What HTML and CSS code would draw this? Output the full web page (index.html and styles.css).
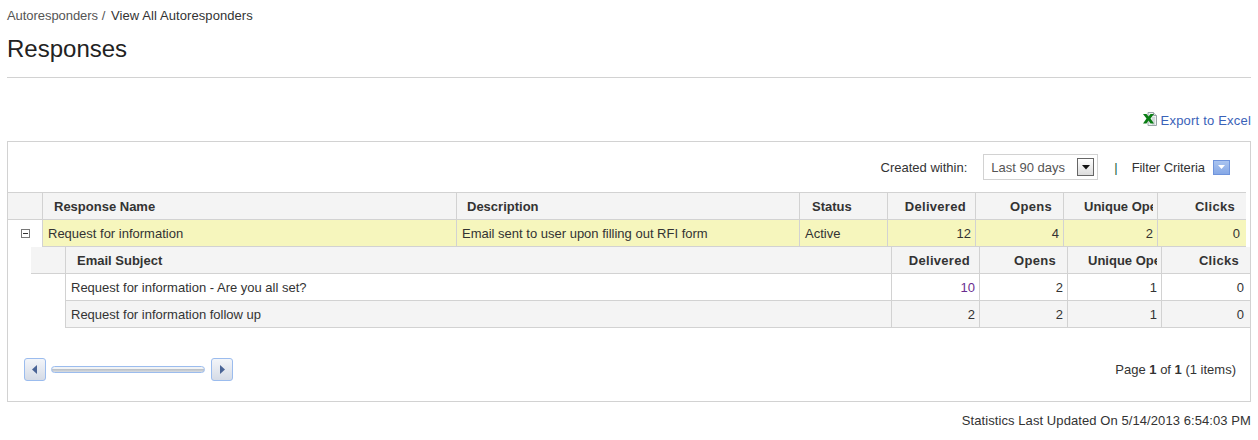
FILE: index.html
```html
<!DOCTYPE html>
<html lang="en">
<head>
<meta charset="utf-8">
<title>Responses</title>
<link rel="stylesheet" href="styles.css">
</head>
<body>
<nav class="crumbs"><a href="#">Autoresponders</a> <span class="sep">/</span> <span class="here">View All Autoresponders</span></nav>
<h1 class="title">Responses</h1>
<div class="export">
  <svg class="xl" width="14" height="14" viewBox="0 0 14 14"><path d="M5 .5h5.500l3 3v10H5z" fill="#eef2f2" stroke="#98a4a6"/><path d="M10.500 .5v3h3" fill="#d8dfe0" stroke="#98a4a6"/><path d="M9 6h3M9 8h3M9 10h3M9 12h3" stroke="#b4bfc0"/><path d="M0 2h3.500L5.500 4.500 7.500 2H11L7.500 6.500 11 11.500H7.500L5.500 8.500 3.500 11.500H0l3.500-5z" fill="#0a7d14"/></svg>
  <a href="#" class="export-link">Export to Excel</a>
</div>
<section class="panel">
  <div class="toolbar">
    <span class="lbl">Created within:</span>
    <div class="select"><span>Last 90 days</span><span class="drop"><svg width="8" height="5" viewBox="0 0 8 5"><path d="M0 0h8L4 4.500z" fill="#111"/></svg></span></div>
    <span class="pipe">|</span>
    <span class="lbl narrow">Filter Criteria</span>
    <span class="filter"><svg width="7" height="4" viewBox="0 0 7 4"><path d="M0 0h7L3.500 4z" fill="#fff"/></svg></span>
  </div>
  <table class="grid main">
    <colgroup><col class="c-exp"><col class="c-name"><col class="c-desc"><col class="c-status"><col class="c-n1"><col class="c-n1"><col class="c-n2"><col class="c-n3"></colgroup>
    <thead><tr><th class="blank"></th><th class="ind">Response Name</th><th class="ind-d">Description</th><th class="ind-s">Status</th><th class="num">Delivered</th><th class="num far">Opens</th><th class="num clip"><div>Unique Opens</div></th><th class="num far">Clicks</th></tr></thead>
    <tbody><tr class="hl"><td class="exp"><span class="minus"></span></td><td>Request for information</td><td>Email sent to user upon filling out RFI form</td><td>Active</td><td class="num">12</td><td class="num">4</td><td class="num">2</td><td class="num">0</td></tr></tbody>
  </table>
  <table class="grid detail">
    <colgroup><col class="d-exp"><col class="d-subj"><col class="c-n1"><col class="c-n1"><col class="c-n2"><col class="d-n3"></colgroup>
    <thead><tr><th class="blank"></th><th class="ind">Email Subject</th><th class="num">Delivered</th><th class="num far">Opens</th><th class="num clip"><div>Unique Opens</div></th><th class="num far">Clicks</th></tr></thead>
    <tbody>
      <tr><td class="none"></td><td>Request for information - Are you all set?</td><td class="num link">10</td><td class="num">2</td><td class="num">1</td><td class="num">0</td></tr>
      <tr class="alt"><td class="none"></td><td>Request for information follow up</td><td class="num">2</td><td class="num">2</td><td class="num">1</td><td class="num">0</td></tr>
    </tbody>
  </table>
  <div class="pager">
    <div class="scroller">
      <span class="sbtn"><svg width="6" height="9" viewBox="0 0 6 9"><path d="M5 0v9L0 4.500z" fill="#4a6496"/></svg></span>
      <span class="track"></span>
      <span class="sbtn"><svg width="6" height="9" viewBox="0 0 6 9"><path d="M1 0v9l5-4.500z" fill="#4a6496"/></svg></span>
    </div>
    <div class="pageinfo">Page <b>1</b> of <b>1</b> (1 items)</div>
  </div>
</section>
<div class="stats">Statistics Last Updated On 5/14/2013 6:54:03 PM</div>
</body>
</html>
```

FILE: styles.css
```css
* { box-sizing: border-box; }
html, body { margin: 0; padding: 0; }
body {
  width: 1258px;
  height: 440px;
  overflow: hidden;
  background: #fff;
  color: #333;
  font: 13px/15px "Liberation Sans", Arial, sans-serif;
  padding: 8px 7px 0;
}
a { text-decoration: none; color: inherit; }
.crumbs { height: 15px; color: #555; letter-spacing: 0.08px; }
.crumbs a { letter-spacing: -0.06px; }
.crumbs .sep { margin-right: 2px; }
.crumbs .here { color: #333; }
.title {
  margin: 12px 0 0;
  font-size: 24px;
  line-height: 28px;
  font-weight: normal;
  color: #222;
  height: 43px;
  border-bottom: 1px solid #d2d2d2;
  width: 1244px;
}
.export {
  display: flex;
  justify-content: flex-end;
  align-items: center;
  gap: 3px;
  margin-top: 34px;
  height: 17px;
  width: 1244px;
  color: #3a62b8;
  letter-spacing: 0.2px;
}
.xl { display: block; margin-top: -3px; margin-right: 1px; }
.panel {
  margin-top: 12px;
  width: 1244px;
  height: 261px;
  border: 1px solid #d2d2d2;
}
.toolbar {
  height: 50px;
  display: flex;
  align-items: center;
  justify-content: flex-end;
  padding: 0 20px 0 0;
}
.lbl { color: #333; }
.narrow { letter-spacing: -0.07px; }
.select {
  display: flex;
  align-items: center;
  justify-content: space-between;
  width: 115px;
  height: 26px;
  margin-left: 16px;
  padding: 0 3px 0 7px;
  border: 1px solid #d2d2d2;
  color: #555;
}
.drop {
  width: 17px;
  height: 18px;
  border: 1px solid #666;
  background: linear-gradient(#fff, #dcdcdc);
  display: flex;
  align-items: center;
  justify-content: center;
}
.pipe { margin: 0 14px 0 16px; color: #264; }
.filter {
  width: 17px;
  height: 15px;
  margin-left: 8px;
  border: 1px solid #6f94dc;
  background: linear-gradient(#a9c4f0, #86a8e6);
  display: flex;
  align-items: center;
  justify-content: center;
}
table.grid {
  table-layout: fixed;
  border-collapse: separate;
  border-spacing: 0;
}
.main { width: 1238px; }
.detail { width: 1219px; margin-left: 23px; }
.c-exp { width: 35px; }
.c-name { width: 414px; }
.c-desc { width: 343px; }
.c-status { width: 88px; }
.c-n1 { width: 88px; }
.c-n2 { width: 94px; }
.c-n3 { width: 88px; }
.d-exp { width: 35px; }
.d-subj { width: 826px; }
.d-n3 { width: 88px; }
th, td {
  height: 27px;
  padding: 0 5px;
  border-right: 1px solid #d2d2d2;
  border-bottom: 1px solid #d2d2d2;
  white-space: nowrap;
  overflow: hidden;
  text-align: left;
  font-size: 13px;
}
th {
  background: #f4f4f4;
  font-weight: bold;
  color: #333;
}
.main th { border-top: 1px solid #d2d2d2; height: 28px; }
.main th:last-child, .main td:last-child { border-right: 0; }
.detail th:last-child, .detail td:last-child { border-right: 0; }
.ind { padding-left: 11px; }
.ind-d { padding-left: 10px; }
.ind-s { padding-left: 12px; }
.num { text-align: right; }
th.num { padding-right: 9px; letter-spacing: 0.3px; }
th.far { padding-right: 11px; }
td.num { padding-right: 4px; }
td.num:last-child { padding-right: 6px; }
th.clip { padding-left: 20px; padding-right: 0; text-align: left; letter-spacing: 0; }
.clip div { overflow: hidden; width: 69px; }
.hl td { background: #f6f6bd; }
.hl .exp { background: #fff; border-bottom: 0; padding: 0 0 0 13px; }
.minus {
  display: block;
  width: 9px;
  height: 9px;
  border: 1px solid #777;
  position: relative;
  background: #fff;
}
.minus::after {
  content: "";
  position: absolute;
  left: 1px;
  right: 1px;
  top: 3px;
  height: 1px;
  background: #333;
}
.none { border-bottom: 0; }
.alt td { background: #f4f4f4; }
.alt .none { background: #fff; }
.link { color: #6a2d8f; }
.pager {
  display: flex;
  justify-content: space-between;
  align-items: center;
  padding: 30px 14px 0 16px;
}
.scroller { display: flex; align-items: center; gap: 5px; }
.sbtn {
  width: 22px;
  height: 23px;
  border: 1px solid #9bbcee;
  border-radius: 3px;
  background: linear-gradient(#f3f5f9, #d5dbe6);
  display: flex;
  align-items: center;
  justify-content: center;
}
.track {
  width: 154px;
  height: 7px;
  margin-right: 1px;
  border: 1px solid #9bbcee;
  border-radius: 4px;
  background: linear-gradient(#f1f3f5 30%, #b9bfc6 45%, #d9dde2 100%);
}
.stats { width: 1244px; text-align: right; margin-top: 11px; letter-spacing: 0.08px; }
```
